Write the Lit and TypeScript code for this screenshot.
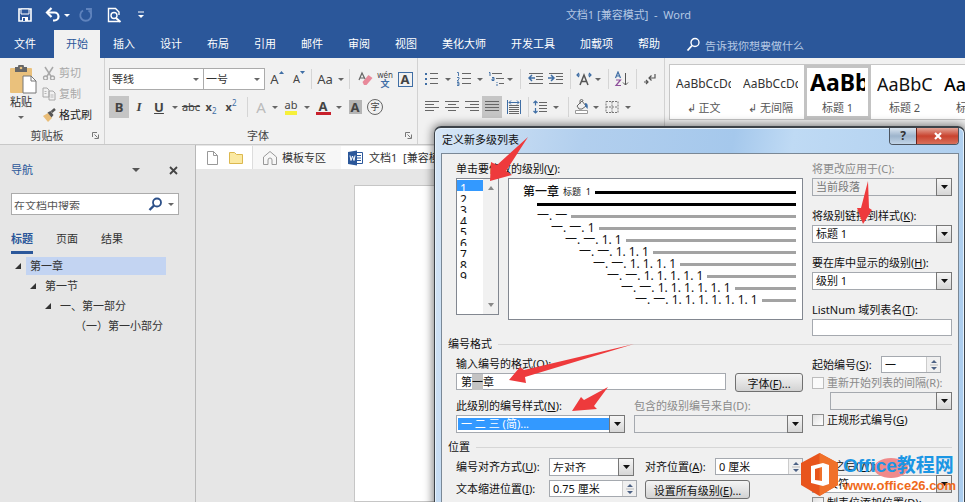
import { LitElement, html, css, svg, TemplateResult } from "lit";
import { customElement } from "lit/decorators.js";
import { classMap } from "lit/directives/class-map.js";

const shared = css`
  * { box-sizing: border-box; }
  button, input, select { font: inherit; color: inherit; margin: 0; padding: 0; border: 0; background: none; border-radius: 0; outline: 0; }
  button { cursor: default; }
  svg { display: block; flex: none; }
`;

const icon = (body: unknown, w = 16, h = 16) =>
  html`<svg width=${w} height=${h} viewBox="0 0 ${w} ${h}" fill="none" aria-hidden="true">${body}</svg>`;

const lines = (rows: [number, number, number][], c = "#666") =>
  rows.map(([x1, x2, y]) => svg`<path d="M${x1} ${y}.5H${x2}" stroke=${c} />`);

const ICONS: Record<string, TemplateResult> = {
  save: icon(svg`<path d="M2 2h12v12H2z" stroke="#fff" stroke-width="1.6"/><path d="M4 2h8v5H4z" fill="#2b579a" stroke="#fff"/><path d="M5 10h6v4H5z" fill="#fff"/><path d="M6 11h2v3H6z" fill="#2b579a"/>`),
  undo: icon(svg`<path d="M2 5.500h7.500a3.800 3.800 0 0 1 0 8H8" stroke="#fff" stroke-width="2.200"/><path d="M6.500 1 2 5.500 6.500 10" stroke="#fff" stroke-width="2.200"/>`),
  redo: icon(svg`<path d="M10.500 3.500A5.500 5.500 0 1 1 5 3.500" stroke="#5f83bd" stroke-width="1.800"/><path d="M8 2h5v5" stroke="#5f83bd" stroke-width="1.800"/>`),
  preview: icon(svg`<path d="M13 14.500H2.500v-13h7l3.500 3.500v3" stroke="#fff" stroke-width="1.400"/><circle cx="8" cy="8.500" r="3" stroke="#fff" stroke-width="1.400"/><path d="m10 11 4.500 4" stroke="#fff" stroke-width="2"/>`),
  more: icon(svg`<path d="M1 1h6" stroke="#fff"/><path d="M1 4h6L4 7z" fill="#fff"/>`, 8, 8),
  find: icon(svg`<circle cx="9" cy="5.500" r="4" stroke="#fff" stroke-width="1.400"/><path d="M6 8.500 1.500 13.500" stroke="#fff" stroke-width="1.800"/>`, 14, 14),
  findDark: icon(svg`<circle cx="9" cy="5.500" r="4" stroke="#2b4f88" stroke-width="1.800"/><path d="M6 8.500 1.500 13" stroke="#2b4f88" stroke-width="2.400"/>`, 14, 14),
  paste: icon(svg`<rect y="3" width="22" height="25" rx="1" fill="#eac17c"/><path d="M5 2h3a3 3 0 0 1 6 0h3v5H5z" fill="#666"/><circle cx="11" cy="3" r="1.300" fill="#eac17c"/><path d="M13 11h8l5 5v12H13z" fill="#fff" stroke="#777"/><path d="M21 11v5h5" stroke="#777"/>`, 27, 29),
  cut: icon(svg`<path d="m3 1 6.500 10M11 1 4.500 11" stroke="#a8a8a8" stroke-width="1.500"/><circle cx="3.500" cy="12" r="2" stroke="#a8a8a8" stroke-width="1.300"/><circle cx="10.500" cy="12" r="2" stroke="#a8a8a8" stroke-width="1.300"/>`, 14, 14),
  copy: icon(svg`<path d="M1 1h4l2 2v7H1zM7 4h4l2 2v7H7z" fill="#f1f1f1" stroke="#a8a8a8"/><path d="M2.500 4.500h2M2.500 6.500h2M8.500 8h3M8.500 10h3" stroke="#b8b8b8"/>`, 14, 14),
  brush: icon(svg`<path d="m1 8 5-3 4 5-4 4z" fill="#e9bd78"/><path d="m5.500 4.500 3-1.500 3 4-2 2.500z" fill="#555"/><path d="m9.500 4 3.500-3" stroke="#555" stroke-width="2.500"/>`, 14, 14),
  launcher: icon(svg`<path d="M1.500 6V1.500H6" stroke="#777"/><path d="m3.500 3.500 3 3M7.500 3.500v4h-4" stroke="#777"/>`, 9, 9),
  up: icon(svg`<path d="M0 3h5L2.500 0z" fill="#3f6ea5"/>`, 5, 3),
  down: icon(svg`<path d="M0 0h5L2.500 3z" fill="#3f6ea5"/>`, 5, 3),
  eraser: icon(svg`<path d="m5.500 11 6-7 4 3-6 7H7z" fill="#e8899a"/><path d="m2 9 3-7 3 6M3 7h4" stroke="#666" stroke-width="1.200"/>`),
  bullets: icon(svg`<path d="M1 2h2v2H1zM1 7h2v2H1zM1 12h2v2H1z" fill="#3f6ea5"/>${lines([[6, 14, 2], [6, 14, 7], [6, 14, 12]])}`),
  numbers: icon(svg`<path d="M1 1.500h1.500V5M1 6.500h2v1.500L1 10h2M1 11.500h2v3H1M1 13h2" stroke="#3f6ea5" stroke-width="0.900"/>${lines([[6, 15, 2], [6, 15, 7], [6, 15, 12]])}`),
  multi: icon(svg`<path d="M1 1.500h1V5M4 6.500h2v3H4v-1.500h2M9 11v1M9 13v2" stroke="#3f6ea5"/>${lines([[4, 14, 2], [8, 16, 7], [11, 16, 12]])}`),
  outdent: icon(svg`${lines([[1, 15, 2], [8, 15, 5], [8, 15, 8], [1, 15, 12]])}<path d="M1 7h6M4 4 1 7l3 3" stroke="#3f6ea5" stroke-width="1.500"/>`),
  indent: icon(svg`${lines([[1, 15, 2], [8, 15, 5], [8, 15, 8], [1, 15, 12]])}<path d="M0 7h6M3 4l3 3-3 3" stroke="#3f6ea5" stroke-width="1.500"/>`),
  scale: icon(svg`<path d="m4 14 4-10 4 10M5.500 10.500h5" stroke="#555" stroke-width="1.500"/><path d="M1 4h3M15 4h-3M3 2 1 4l2 2M13 2l2 2-2 2" stroke="#3f6ea5" stroke-width="1.200"/>`),
  sort: icon(svg`<path d="m1.500 7 2.500-6 2.500 6M2.500 5h3" stroke="#3f6ea5" stroke-width="1.200"/><path d="M2 9h4.500L2 14.500h5" stroke="#8e4f9b" stroke-width="1.200"/><path d="M11.500 2v12M9 11.500l2.500 2.500 2.500-2.500" stroke="#555"/>`),
  mark: icon(svg`<path d="M13 3v4H7M9.500 4.500 7 7l2.500 2.500M2 11h4M4 9l2 2-2 2" stroke="#555" stroke-width="1.200"/>`),
  left: icon(lines([[1, 15, 2], [1, 10, 5], [1, 15, 8], [1, 10, 11]])),
  center: icon(lines([[1, 15, 2], [4, 12, 5], [1, 15, 8], [4, 12, 11]])),
  right: icon(lines([[1, 15, 2], [6, 15, 5], [1, 15, 8], [6, 15, 11]])),
  justify: icon(lines([[1, 15, 2], [1, 15, 5], [1, 15, 8], [1, 15, 11]])),
  spread: icon(svg`${lines([[3, 13, 6], [3, 13, 8], [3, 13, 10], [3, 13, 12], [3, 13, 14]])}<path d="M1.500 1v14M14.500 1v14M3 3.500h10M5 1.500l-2 2 2 2M11 1.500l2 2-2 2" stroke="#3f6ea5"/>`),
  spacing: icon(svg`${lines([[7, 15, 3], [7, 15, 6], [7, 15, 9], [7, 15, 12]])}<path d="M3.500 2v4.500M3.500 9v5M1.500 4l2-2 2 2M1.500 12l2 2 2-2" stroke="#3f6ea5" stroke-width="1.200"/>`),
  fill: icon(svg`<path d="m3 7 5-5 4 5-4 3H5z" stroke="#666"/><path d="M6 5V2a1.500 1.500 0 0 1 3 0" stroke="#666"/><path d="M11 4c3 0 3 3 2.500 6L11 7z" fill="#3f6ea5"/><path d="M1.500 11.500h12v3h-12z" fill="#fff" stroke="#999"/>`),
  border: icon(svg`<path d="M2 2.500h12v11H2zM8 2.500v11M2 8h12" stroke="#777" stroke-dasharray="2 1"/>`),
  file: icon(svg`<path d="M1.500 1.500h6l4 4v9h-10z" fill="#fff" stroke="#999"/><path d="M7.500 1.500v4h4" stroke="#999"/>`, 13),
  folder: icon(svg`<path d="M1.500 2.500h5l2 2h6v9h-13z" fill="#fbe9a2" stroke="#dcb84f"/>`),
  home: icon(svg`<path d="M1.500 7 8 1.500 14.500 7v7.500H10V10a2 2 0 0 0-4 0v4.500H1.500z" stroke="#999"/>`),
  word: icon(svg`<path d="M8 2.500h6.500v11H8M9 5.500h4M9 8h4M9 10.500h4" stroke="#2b579a"/><path d="M0 2 9 .5v15L0 14z" fill="#2b579a"/><path d="m2 5.500 1 5 1.500-4.500L6 10.500l1-5" stroke="#fff"/>`),
};

const caret = (c = "#666") => icon(svg`<path d="M0 0h6L3 3z" fill=${c} />`, 6, 3);

type Slot = [kind: string, width: number];

@customElement("word-ribbon")
class WordRibbon extends LitElement {
  static styles = [shared, css`
    :host { display: block; }
    .title { height: 30px; background: #2b579a; color: #b4c7e3; display: flex; align-items: center; padding: 0 274px 0 17px; }
    .title button { margin-right: 12px; }
    .title .undo { margin-right: 3px; }
    .title .drop { margin-right: 8px; }
    .title .wide { margin-right: 15px; }
    .name { margin-left: auto; white-space: nowrap; }
    .tabs { height: 28px; background: #2b579a; color: #fff; display: flex; gap: 1px; padding-left: 2px; white-space: nowrap; }
    .tabs button { padding: 0 12px; }
    .tabs .first { margin-right: 5px; }
    .tabs .on { background: #f1f1f1; color: #2b579a; }
    .tell { display: flex; align-items: center; gap: 5px; margin-left: 13px; color: #b4c7e3; }
    .tell span { clip-path: inset(7px 0 1px); padding-top: 4px; }
    .body { height: 87px; background: #f1f1f1; border-bottom: 1px solid #c8c8c8; display: flex; overflow: hidden; }
    .group { border-right: 1px solid #d2d2d2; flex: none; display: grid; grid-template-rows: 70px 16px; position: relative; padding: 0 4px; }
    .clipboard { width: 105px; }
    .font { width: 313px; }
    .para { width: 247px; }
    .cap { text-align: center; line-height: 16px; color: #444; padding-right: 10px; }
    .launch { position: absolute; right: 4px; bottom: 4px; }
    .clip { display: grid; grid-template-columns: 34px 1fr; gap: 2px; padding: 7px 0 0; align-items: start; }
    .paste { display: flex; flex-direction: column; align-items: center; line-height: 16px; }
    .paste svg:last-child { margin-top: 6px; }
    .paste svg:first-child { margin-left: 4px; }
    .ops { display: grid; gap: 5px; color: #a8a8a8; padding-left: 2px; }
    .ops button { display: flex; gap: 3px; align-items: center; line-height: 16px; white-space: nowrap; }
    .ops .live { color: #222; }
    .rows { display: grid; grid-template-rows: 22px 22px; gap: 6px; padding-top: 10px; }
    .row { display: flex; align-items: center; }
    .slot { display: flex; align-items: center; justify-content: center; height: 22px; flex: none; color: #444; font-size: 13px; line-height: 16px; }
    .slot > svg { margin-left: -1px; }
    .w4 { width: 4px; } .w8 { width: 8px; } .w12 { width: 12px; } .w16 { width: 16px; } .w20 { width: 20px; } .w24 { width: 24px; }
    .slot.on { background: #c5c5c5; }
    .rule { width: 1px; height: 20px; background: #d5d5d5; }
    .combo { display: flex; align-items: center; background: #fff; border: 1px solid #ababab; height: 22px; padding-right: 4px; width: 95px; margin-right: -1px; }
    .combo.size { width: 62px; margin-right: 0; }
    .combo select { appearance: none; flex: 1; min-width: 0; padding-left: 2px; clip-path: inset(3px 0 1px); }
    .tip { align-self: flex-start; padding-top: 3px; }
    .small { font-size: 11px; }
    .abc { font-size: 11px; text-decoration: line-through; }
    .ital { font-family: "Liberation Serif", serif; font-style: italic; font-weight: bold; }
    .under { text-decoration: underline; font-weight: bold; }
    .bold { font-weight: bold; }
    .sub { font-size: 8px; line-height: 8px; color: #3f6ea5; }
    .low { align-self: flex-end; padding-bottom: 3px; } .high { align-self: flex-start; padding-top: 3px; }
    .pale { color: #bbb; font-size: 15px; }
    .hl { border-bottom: 4px solid #f6f03a; line-height: 12px; font-size: 11px; }
    .red { border-bottom: 3px solid #c8202c; line-height: 12px; font-weight: bold; padding: 0 3px; }
    .shade { background: #b5b5b5; line-height: 14px; padding: 0 2px; font-weight: bold; }
    .box { border: 1px solid #3f6ea5; line-height: 13px; padding: 0 2px; font-weight: bold; }
    .ring { border: 1px solid #666; border-radius: 50%; width: 16px; line-height: 14px; font-size: 9px; text-align: center; }
    .wen { font-size: 8px; line-height: 9px; text-align: center; }
    .wen b { display: block; color: #3f6ea5; font-size: 9px; line-height: 9px; }
    .gallery { flex: 1; min-width: 0; height: 56px; margin: 6px 0 0 4px; border: 1px solid #c6c6c6; border-right: 0; background: #fff; display: flex; overflow: hidden; }
    .style { flex: none; width: 67px; border: 3px solid transparent; padding: 0 3px; display: grid; grid-template-rows: 32px 16px; overflow: hidden; color: #555; }
    .style.on { border-color: #c3c3c3; }
    .sample { overflow: hidden; white-space: nowrap; text-align: left; color: #333; line-height: 32px; font-size: 12px; }
    .style.on .sample { font-size: 23px; font-weight: bold; line-height: 28px; color: #000; }
    .sample.mid { font-size: 18px; color: #111; }
    .sample.strong { font-size: 18px; font-weight: 500; color: #000; }
    .lab { line-height: 16px; white-space: nowrap; text-align: center; }
  `];

  private glyph(kind: string): unknown {
    switch (kind) {
      case "caret": return caret();
      case "rule": return html`<i class="rule"></i>`;
      case "grow": return html`<span>A</span><span class="tip">${ICONS.up}</span>`;
      case "shrink": return html`<span class="small">A</span><span class="tip">${ICONS.down}</span>`;
      case "case": return html`Aa`;
      case "wen": return html`<span class="wen">wén<b>文</b></span>`;
      case "box": return html`<span class="box">A</span>`;
      case "bold": return html`<span class="bold">B</span>`;
      case "italic": return html`<span class="ital">I</span>`;
      case "under": return html`<span class="under">U</span>`;
      case "abc": return html`<span class="abc">abc</span>`;
      case "sub": return html`<b class="small">x</b><span class="sub low">2</span>`;
      case "sup": return html`<b class="small">x</b><span class="sub high">2</span>`;
      case "effect": return html`<span class="pale">A</span>`;
      case "hl": return html`<span class="hl">ab</span>`;
      case "red": return html`<span class="red">A</span>`;
      case "shade": return html`<span class="shade">A</span>`;
      case "ring": return html`<span class="ring">字</span>`;
      default: return ICONS[kind];
    }
  }

  private slots(list: Slot[], on = "") {
    return list.map(([kind, w]) => kind === "rule"
      ? html`<span class="slot w${w}">${this.glyph(kind)}</span>`
      : html`<button class="slot w${w} ${kind === on ? "on" : ""}" aria-label=${kind}>${this.glyph(kind)}</button>`);
  }

  render() {
    const tabs = ["文件", "开始", "插入", "设计", "布局", "引用", "邮件", "审阅", "视图", "美化大师", "开发工具", "加载项", "帮助"];
    const styles = [["AaBbCcDd", "↲ 正文", ""], ["AaBbCcDd", "↲ 无间隔", ""], ["AaBb", "标题 1", ""], ["AaBbC", "标题 2", "mid"], ["AaBbC", "标题 3", "strong"]];
    return html`
      <div class="title">
        <button aria-label="save">${ICONS.save}</button>
        <button class="undo" aria-label="undo">${ICONS.undo}</button>
        <button class="drop" aria-label="undo list">${caret("#fff")}</button>
        <button aria-label="redo">${ICONS.redo}</button>
        <button class="wide" aria-label="preview">${ICONS.preview}</button>
        <button aria-label="more">${ICONS.more}</button>
        <span class="name">文档1 [兼容模式] &nbsp;- &nbsp;Word</span>
      </div>
      <nav class="tabs">
        ${tabs.map((t, i) => html`<button class=${classMap({ first: i === 0, on: i === 1 })}>${t}</button>`)}
        <label class="tell">${ICONS.find}<span>告诉我你想要做什么</span></label>
      </nav>
      <div class="body">
        <section class="group clipboard">
          <div class="clip">
            <button class="paste">${ICONS.paste}<span>粘贴</span>${caret()}</button>
            <div class="ops">
              <button>${ICONS.cut}剪切</button>
              <button>${ICONS.copy}复制</button>
              <button class="live">${ICONS.brush}格式刷</button>
            </div>
          </div>
          <div class="cap">剪贴板</div>
          <button class="launch" aria-label="clipboard options">${ICONS.launcher}</button>
        </section>
        <section class="group font">
          <div class="rows">
            <div class="row">
              <div class="combo"><select aria-label="font"><option>等线</option></select>${caret()}</div>
              <div class="combo size"><select aria-label="size"><option>一号</option></select>${caret()}</div>
              ${this.slots([["grow", 24], ["shrink", 20], ["rule", 4], ["case", 24], ["caret", 8], ["rule", 8], ["eraser", 24], ["wen", 16], ["box", 24]])}
            </div>
            <div class="row">
              ${this.slots([["bold", 20], ["italic", 20], ["under", 20], ["caret", 12], ["abc", 20], ["sub", 20], ["sup", 20], ["rule", 12], ["effect", 16], ["caret", 12], ["hl", 20], ["caret", 12], ["red", 20], ["caret", 12], ["shade", 20], ["ring", 20]], "bold")}
            </div>
          </div>
          <div class="cap">字体</div>
          <button class="launch" aria-label="font options">${ICONS.launcher}</button>
        </section>
        <section class="group para">
          <div class="rows">
            <div class="row">
              ${this.slots([["bullets", 20], ["caret", 12], ["numbers", 20], ["caret", 12], ["multi", 20], ["caret", 8], ["rule", 12], ["outdent", 20], ["indent", 20], ["rule", 8], ["scale", 20], ["caret", 8], ["rule", 12], ["sort", 16], ["rule", 12], ["mark", 16]])}
            </div>
            <div class="row">
              ${this.slots([["left", 20], ["center", 20], ["right", 20], ["justify", 20], ["spread", 24], ["rule", 4], ["spacing", 20], ["caret", 12], ["rule", 12], ["fill", 16], ["caret", 12], ["border", 20], ["caret", 12]], "justify")}
            </div>
          </div>
        </section>
        <div class="gallery">
          ${styles.map(([s, l, c], i) => html`
            <button class="style ${i === 2 ? "on" : ""}"><span class="sample ${c}">${s}</span><span class="lab">${l}</span></button>`)}
        </div>
      </div>`;
  }
}

@customElement("nav-pane")
class NavPane extends LitElement {
  static styles = [shared, css`
    :host { display: block; border-right: 1px solid #b8b8b8; padding: 16px 16px 0 11px; color: #333; }
    .head { display: flex; align-items: center; height: 18px; color: #2b579a; }
    .head .drop { margin-left: auto; margin-right: 29px; }
    .search { display: flex; align-items: center; height: 22px; margin-top: 14px; background: #fff; border: 1px solid #ababab; padding-right: 4px; gap: 6px; }
    .search input { flex: 1; min-width: 0; height: 18px; padding: 2px 0 0 2px; clip-path: inset(6px 0 3px); }
    .search input::placeholder { color: #555; opacity: 1; }
    .tabs { display: flex; gap: 23px; margin: 12px 0 2px; }
    .tabs button { height: 27px; border-bottom: 3px solid transparent; }
    .tabs .on { color: #2b579a; font-weight: bold; border-color: #2b579a; }
    .tree { list-style: none; margin: 0; padding: 0 13px 0 4px; }
    .node { display: flex; align-items: center; height: 20px; gap: 4px; }
    .node svg { width: 7px; }
    .node button { flex: 1; height: 18px; padding-left: 4px; text-align: left; white-space: nowrap; }
    .node .on { background: #c3d4f2; }
    .l1 { padding-left: 15px; } .l2 { padding-left: 30px; } .l3 { padding-left: 45px; }
  `];
  render() {
    const nodes = ["第一章", "第一节", "一、第一部分", "（一）第一小部分"];
    return html`
      <div class="head">导航
        <button class="drop" aria-label="options">${icon(svg`<path d="M0 0h8L4 4z" fill="#555"/>`, 8, 4)}</button>
        <button aria-label="close">${icon(svg`<path d="m1 1 7 7M8 1 1 8" stroke="#444" stroke-width="1.800"/>`, 10, 9)}</button>
      </div>
      <div class="search"><input aria-label="search" placeholder="在文档中搜索">${ICONS.findDark}${caret()}</div>
      <div class="tabs"><button class="on">标题</button><button>页面</button><button>结果</button></div>
      <ul class="tree">
        ${nodes.map((n, i) => html`<li class="node l${i}">
          ${i < 3 ? icon(svg`<path d="M6 0v6H0z" fill="#333"/>`, 7, 7) : icon("", 7, 7)}
          <button class=${i === 0 ? "on" : ""}>${n}</button></li>`)}
      </ul>`;
  }
}

@customElement("list-dialog")
class ListDialog extends LitElement {
  static styles = [shared, css`
    :host { display: block; border: 1px solid #3c4248; border-top-width: 2px; border-radius: 7px 7px 0 0; padding: 0 5px 0 6px; color: #111;
      background: linear-gradient(100deg, #d6e6f6 0, #b2cfee 25%, #a5c8ec 50%, #bfdaf4 60%, #a9cbed 100%); box-shadow: 0 0 8px 2px rgba(0, 0, 0, .45), inset 0 0 0 1px #e6f2fc; }
    .bar { height: 25px; display: flex; align-items: flex-start; justify-content: space-between; }
    .bar span { line-height: 24px; padding-left: 1px; }
    .win { display: flex; border: 1px solid #4c5560; border-top: 0; border-radius: 0 0 4px 4px; overflow: hidden; }
    .win button { height: 16px; width: 26px; display: grid; place-items: center; font-weight: bold; font-size: 12px; line-height: 14px; color: #333; background: linear-gradient(#d9e4ef, #9db4cc 50%, #c2d5e8); }
    .win .x { width: 42px; border-left: 1px solid #6b2019; background: linear-gradient(#e3a597, #c9432f 50%, #d8705a); }
    .main { background: #f0f0f0; border: 1px solid #7a8896; border-bottom: 0; padding: 7px 6px 24px 14px; }
    .top { display: grid; grid-template-columns: 43px minmax(0, 1fr) 140px; column-gap: 9px; }
    .pick { display: grid; grid-template-columns: minmax(0, 1fr); grid-template-rows: 16px 137px; row-gap: 1px; }
    .label { display: block; line-height: 16px; height: 17px; white-space: nowrap; }
    .off { color: #8a8a8a; }
    .levels { display: flex; background: #fff; border: 1px solid #828790; overflow: hidden; }
    .levels select { width: 26px; height: 135px; overflow: hidden; font-size: 12px; padding-top: 1px; }
    .levels option { min-height: 11px; height: 11px; line-height: 11px; padding: 0 0 0 3px; overflow: hidden; color: #111; }
    .levels option:checked { background: linear-gradient(#3399ff, #3399ff); color: #fff; -webkit-text-fill-color: #fff; }
    .scroll { flex: 1; background: #f1f1f1; display: flex; flex-direction: column; align-items: center; justify-content: space-between; padding: 7px 0; }
    .view { background: #fff; border: 1px solid #828790; height: 142px; margin-top: 17px; padding: 7px 6px 0 14px; }
    .lead, .step { display: flex; align-items: center; height: 12px; white-space: nowrap; font-size: 12px; line-height: 12px; gap: 4px; }
    .lead b { font-weight: 500; } .lead small { font-size: 9px; }
    .line { flex: 1; height: 3px; background: #a3a3a3; }
    .dark { background: #000; }
    .side { display: grid; row-gap: 12px; align-content: start; }
    .combo { display: flex; height: 18px; background: #fff; border: 1px solid #a5a9af; }
    .combo select { appearance: none; flex: 1; min-width: 0; padding-left: 3px; clip-path: inset(1px 0 3px); opacity: 1; }
    .combo.off { background: #f0f0f0; }
    .combo select:disabled { color: #777; }
    .combo.hot select { background: #3399ff; color: #fff; margin: 2px 1px; padding-left: 3px; line-height: 12px; clip-path: none; }
    .arrow { width: 16px; margin: -1px; border: 1px solid #777; background: linear-gradient(#f6f6f6, #d6d6d6); display: grid; place-items: center; flex: none; }
    .text { height: 17px; background: #fff; border: 1px solid #a5a9af; width: 100%; padding: 0 4px; }
    .edit { flex: 1; display: flex; align-items: center; cursor: text; }
    .edit mark { background: #c3c3c3; color: inherit; }
    .head { display: flex; align-items: center; gap: 6px; margin-left: -8px; line-height: 16px; }
    .head::after { content: ""; flex: 1; height: 1px; background: #d6d6d6; }
    .head span { clip-path: inset(2px 0 3px); }
    .gap { margin-top: 6px; }
    .format { display: grid; grid-template-columns: minmax(0, 1fr) 140px; column-gap: 9px; padding-top: 4px; }
    .stack { display: grid; row-gap: 6px; align-content: start; }
    .two { display: grid; grid-template-columns: 1fr 1fr; column-gap: 9px; }
    .with { display: flex; gap: 9px; }
    .btn { border: 1px solid #707070; border-radius: 3px; height: 19px; background: linear-gradient(#f4f4f4, #e4e4e4 50%, #d2d2d2); width: 68px; white-space: nowrap; line-height: 19px; }
    .btn.wide { width: 105px; grid-column: span 2; }
    .opts { display: grid; row-gap: 2px; align-content: start; }
    .spinrow { display: grid; grid-template-columns: 60px 60px; column-gap: 9px; align-items: center; line-height: 16px; white-space: nowrap; }
    .check { display: flex; align-items: center; gap: 3px; line-height: 15px; white-space: nowrap; }
    .check input { appearance: none; width: 12px; height: 12px; background: linear-gradient(135deg, #e0e0e0, #fff); border: 1px solid #8e8f8f; flex: none; }
    .check.off input { border-color: #bcbcbc; background: #fafafa; }
    .indent { margin-left: 18px; }
    .spin { display: flex; height: 17px; background: #fff; border: 1px solid #a5a9af; min-width: 0; }
    .spin input { flex: 1; min-width: 0; width: 0; padding-left: 3px; clip-path: inset(2px 0 2px); }
    .ud { width: 14px; background: #f0f0f0; border-left: 1px solid #ccc; display: grid; place-items: center; flex: none; }
    .place { display: grid; grid-template-columns: minmax(0, 1fr) 140px; column-gap: 9px; padding-top: 3px; }
    .cells { display: grid; grid-template-columns: 85px 88px 62px minmax(0, 1fr); column-gap: 8px; row-gap: 4px; line-height: 18px; white-space: nowrap; align-content: start; }
    .short { width: 85px; }
    .under { text-decoration: underline; }
  `];

  private key(text: string, k: string) { return html`${text}(<span class="under">${k}</span>):`; }
  private combo(id: string, value: string, off = false, cls = "") {
    return html`<div class="combo ${off ? "off" : ""} ${cls}">
      <select id=${id} aria-label=${id} ?disabled=${off}><option>${value}</option></select>
      <span class="arrow">${icon(svg`<path d="M0 0h7L3.500 4z" fill="#111"/>`, 7, 4)}</span></div>`;
  }
  private spin(id: string, value: string) {
    return html`<div class="spin"><input id=${id} .value=${value}><span class="ud">${icon(svg`<path d="M1 4h6L4 1zM1 8h6l-3 3z" fill="#4d6285"/><path d="M0 6h8" stroke="#bbb"/>`, 8, 12)}</span></div>`;
  }
  private pair(id: string, label: unknown, value: string, off = false) {
    return html`<div><label class="label ${off ? "off" : ""}" for=${id}>${label}</label>${this.combo(id, value, off)}</div>`;
  }

  render() {
    return html`
      <div class="bar"><span>定义新多级列表</span>
        <div class="win"><button>?</button><button class="x" aria-label="close">${icon(svg`<path d="m2 1 6 6M8 1 2 7" stroke="#fff" stroke-width="2.200"/>`, 10, 8)}</button></div></div>
      <div class="main">
        <div class="top">
          <div class="pick">
            <label class="label" for="level">${this.key("单击要修改的级别", "V")}</label>
            <div class="levels">
              <select id="level" size="9">${[1, 2, 3, 4, 5, 6, 7, 8, 9].map((n) => html`<option ?selected=${n === 1}>${n}</option>`)}</select>
              <span class="scroll">${icon(svg`<path d="M0 4h6L3 0z" fill="#888"/>`, 6, 4)}${icon(svg`<path d="M0 0h6L3 4z" fill="#888"/>`, 6, 4)}</span>
            </div>
          </div>
          <div class="view">
            <div class="lead"><b>第一章</b><small>标题 &nbsp;1</small><i class="line dark"></i></div>
            ${Array.from({ length: 9 }, (_, i) => html`
              <div class="step" style="padding-left:${i === 0 ? 14 : 14 * i}px">${i ? ["一", "一", ...Array(i - 1).fill("1")].join(". ") : ""}<i class="line ${i ? "" : "dark"}"></i></div>`)}
          </div>
          <div class="side">
            ${this.pair("apply", html`将更改应用于(C):`, "当前段落", true)}
            ${this.pair("link", this.key("将级别链接到样式", "K"), "标题 1")}
            ${this.pair("show", this.key("要在库中显示的级别", "H"), "级别 1")}
            <div><label class="label" for="num">${this.key("ListNum 域列表名", "T")}</label><input class="text" id="num"></div>
          </div>
        </div>
        <div class="head"><span>编号格式</span></div>
        <div class="format">
          <div class="stack">
            <div><span class="label" id="fmt">${this.key("输入编号的格式", "O")}</span>
              <div class="with"><div class="text edit" role="textbox" contenteditable="true" aria-labelledby="fmt">第<mark>一</mark>章</div><button class="btn">字体(<span class="under">F</span>)...</button></div></div>
            <div class="two">
              <div><label class="label" for="numstyle">${this.key("此级别的编号样式", "N")}</label>${this.combo("numstyle", "一 二 三 (简)...", false, "hot")}</div>
              ${this.pair("from", html`包含的级别编号来自(D):`, "", true)}
            </div>
          </div>
          <div class="opts">
            <div class="spinrow"><label for="start">${this.key("起始编号", "S")}</label>${this.spin("start", "一")}</div>
            <label class="check off"><input type="checkbox" disabled><span>重新开始列表的间隔(R):</span></label>
            <div class="indent">${this.combo("restart", "", true)}</div>
            <label class="check"><input type="checkbox"><span>正规形式编号(<span class="under">G</span>)</span></label>
          </div>
        </div>
        <div class="head gap"><span>位置</span></div>
        <div class="place">
          <div class="cells">
            <label for="align">${this.key("编号对齐方式", "U")}</label><div class="short">${this.combo("align", "左对齐")}</div>
            <label for="at">${this.key("对齐位置", "A")}</label>${this.spin("at", "0 厘米")}
            <label for="inset">${this.key("文本缩进位置", "I")}</label>${this.spin("inset", "0.75 厘米")}
            <button class="btn wide">设置所有级别(<span class="under">E</span>)...</button>
          </div>
          <div class="opts">
            ${this.pair("after", this.key("编号之后", "W"), "制表符")}
            <label class="check"><input type="checkbox"><span>制表位添加位置(<span class="under">D</span>):</span></label>
          </div>
        </div>
      </div>`;
  }
}

@customElement("app-root")
class AppRoot extends LitElement {
  static styles = [shared, css`
    :host { display: flex; flex-direction: column; height: 100vh; position: relative; overflow: hidden; background: #e6e6e6; color: #333;
      font: 11px/16px "Noto Sans", "Noto Sans CJK SC", sans-serif; }
    .work { flex: 1; display: grid; grid-template-columns: 196px 1fr; min-height: 0; }
    .docs { display: flex; height: 23px; background: #e6e6e6; }
    .docs div, .docs button { display: flex; align-items: center; white-space: nowrap; }
    .quick { background: #fff; gap: 9px; padding: 0 8px 0 10px; border-right: 1px solid #ddd; }
    .home { background: #f7f7f7; width: 88px; gap: 4px; padding-left: 9px; }
    .doc { background: #fff; width: 140px; gap: 5px; padding-left: 7px; }
    .area { display: flex; flex-direction: column; padding-top: 1px; min-width: 0; }
    .page { flex: 1; background: #fff; border: 1px solid #c6c6c6; margin: 16px 0 0 158px; }
    .dialog { position: absolute; top: 126px; left: 434px; right: 0; }
    .arrows { position: absolute; top: 0; left: 0; pointer-events: none; }
    .logo { position: absolute; top: 453px; left: 801px; display: flex; gap: 5px; }
    .words { font-weight: bold; white-space: nowrap; position: relative; }
    .blot { position: absolute; left: 31px; top: 5px; width: 34px; height: 20px; border-radius: 50%; background: #f08a8a; }
    .brand { position: relative; color: #1b96e4; font: bold 19px/26px "Liberation Sans", "Noto Sans CJK SC", sans-serif; }
    .site { position: relative; color: #ef6a1a; font: bold 13px/14px "Liberation Sans", sans-serif; }
  `];
  render() {
    return html`
      <word-ribbon></word-ribbon>
      <div class="work">
        <nav-pane></nav-pane>
        <main class="area">
          <div class="docs">
            <div class="quick">${ICONS.file}${ICONS.folder}</div>
            <button class="home">${ICONS.home}模板专区</button>
            <button class="doc">${ICONS.word}文档1 &nbsp;[兼容模式]</button>
          </div>
          <div class="page"></div>
        </main>
      </div>
      <list-dialog class="dialog"></list-dialog>
      <svg class="arrows" width="965" height="502" viewBox="0 0 965 502" fill="#ee3a3c">
        <path d="M490 181 491 162 497 165 528 137 506 171 512 175z"/>
        <path d="M863 224 857 208 861 208 868 181 869 208 872 210z"/>
        <path d="M509 380 520 367 524 370 634 344 525 377 526 383z"/>
        <path d="M572 411 581 397 584 400 608 387 594 406 597 409z"/>
      </svg>
      <div class="logo">
        <svg width="37" height="43" viewBox="0 0 37 43"><path d="M18.500 0 37 10v22L18.500 43 0 32V10z" fill="#e8541c"/><path d="M18.500 0 37 10v22L18.500 43z" fill="#f0712a"/><path fill-rule="evenodd" d="m10 13 12-3 6 2v19l-6 2-12-3zm4 3v11l7 1V14z" fill="#fff"/></svg>
        <div class="words"><i class="blot"></i><div class="brand">Office教程网</div><div class="site">www.office26.com</div></div>
      </div>`;
  }
}
